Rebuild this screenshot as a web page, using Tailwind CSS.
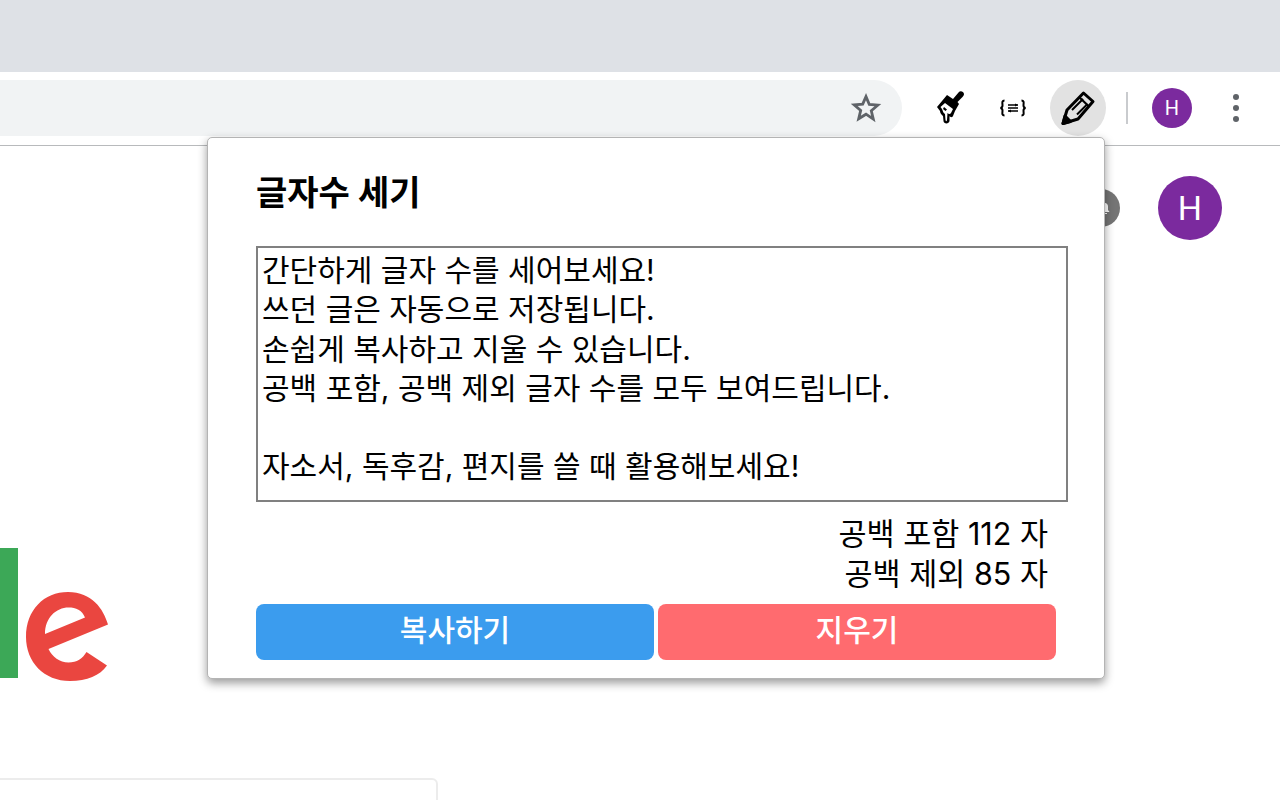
<!DOCTYPE html>
<html lang="ko">
<head>
<meta charset="utf-8">
<script src="https://cdn.jsdelivr.net/npm/@tailwindcss/browser@4"></script>
</head>
<body class="w-[1280px] h-[800px] overflow-hidden bg-white relative font-['Inter','Noto_Sans_CJK_KR',sans-serif]">
  <div class="h-[72px] bg-[#dee1e6]"></div>
  <div class="h-[74px] bg-white border-b border-b-[#b8babc] flex items-center box-border pb-[2px]">
    <div class="w-[902px] h-[56px] bg-[#f1f3f4] rounded-r-[28px] flex items-center justify-end pr-[20px] shrink-0">
      <svg width="32" height="32" viewBox="0 0 32 32"><path d="M16 4.600l3.300 7.900 8.500.7-6.500 5.600 2 8.300L16 22.200l-7.300 4.500 2-8.300-6.500-5.600 8.500-.7z" fill="none" stroke="#5f6368" stroke-width="2.800"/></svg>
    </div>
    <div class="w-[56px] h-[56px] flex items-center justify-center shrink-0 ml-[20px]">
      <svg width="36" height="38" viewBox="0 0 36 38"><path d="M15 6l6 4 5.500-6.500C28 1.500 31.500 2 32 5c0 1.500-1 2.500-2.500 4l-4 4 1.500 2-4 7-2 5c-1 2-3 1-3.500 0v5c-.5 3.500-6 3-6 0l-.5-5c-2-2-3-3-3-5l-3-4z" fill="#000"/><path d="M8.500 18l4.500-4 8 6-2 4c-1 1.500-2.500 1-3.500 0l-.5 7c0 1.500-1.500 1.500-1.500 0l-.5-6c-2-1-2-3-3-5z" fill="#fff"/><path d="M12 18l3 2.500-1.500 1.500-2.500-2z" fill="#000"/></svg>
    </div>
    <div class="w-[44px] h-[56px] flex items-center justify-center shrink-0 ml-[13px]">
      <svg width="30" height="20" viewBox="0 0 30 20" fill="none" stroke="#000" stroke-width="2"><path d="M6.500 2.500C3.500 2.500 4.500 5 4.500 7.500c0 2-2 2.500-2 2.500s2 .5 2 2.500c0 2.500-1 5 2 5M23.500 2.500c3 0 2 2.500 2 5 0 2 2 2.500 2 2.500s-2 .5-2 2.500c0 2.500 1 5-2 5"/><path d="M10 7h10M10 10h10M10 13h10" stroke-width="1.300"/><path d="M17 5.500l3 1.500-3 1.500zM13 11.500l-3 1.500 3 1.500z" fill="#000" stroke="none"/></svg>
    </div>
    <div class="w-[56px] h-[56px] rounded-full bg-[#e2e2e2] flex items-center justify-center shrink-0 ml-[15px]">
      <svg width="36" height="36" viewBox="0 0 36 36" fill="none" stroke="#000" stroke-width="3" stroke-linejoin="round"><path d="M23.500 3l9.500 8.500L18 29 3 33.500 7 20z"/><path d="M19 7l9.500 9" stroke-width="2.200"/><path d="M12 20L23 9M17 24.500L27.500 14" stroke-width="2"/><path d="M3 33.500l2-7.500 5.500 5.500z" fill="#000"/></svg>
    </div>
    <div class="w-[2px] h-[32px] bg-[#c9cbce] ml-[20px] shrink-0"></div>
    <div class="w-[40px] h-[40px] rounded-full bg-[#7b2a9e] text-white ml-[24px] flex items-center justify-center text-[20px] shrink-0 font-['Roboto',sans-serif]">H</div>
    <div class="flex flex-col gap-[5px] ml-[41px] shrink-0">
      <span class="w-[6px] h-[6px] rounded-full bg-[#5f6368] block"></span>
      <span class="w-[6px] h-[6px] rounded-full bg-[#5f6368] block"></span>
      <span class="w-[6px] h-[6px] rounded-full bg-[#5f6368] block"></span>
    </div>
  </div>

  <!-- page behind popup -->
  <div class="absolute left-[1082px] top-[189px] w-[38px] h-[38px] rounded-full bg-[#757575]">
    <svg class="absolute left-[20px] top-[13px]" width="8" height="12" viewBox="0 0 8 12"><path d="M0 10h7.500L6 8V4.500C6 2.500 5 1.500 3.500 1L2 1v10h3v1H2z" fill="#fff"/></svg>
  </div>
  <div class="absolute left-[1158px] top-[176px] w-[64px] h-[64px] rounded-full bg-[#7b2a9e] text-white flex items-center justify-center text-[34px] font-['Roboto',sans-serif]">H</div>
  <div class="absolute left-0 top-[548px] w-[18px] h-[130px] bg-[#3ca857]"></div>
  <svg class="absolute left-[24px] top-[590px]" width="86" height="93" viewBox="0 0 86 93"><path d="M84 34.500 24.500 59c4 8 11 13.500 20 13.500 8.500 0 14-4 18-10.500L83 75.500C76 85.500 63 91 46 91 20 91 2 72 2 47 2 20 20 2 44 2c24 0 35.500 17 40 32.500zM21 44 61 27.500C58 20 52 17.500 44.500 17.500 32 17.500 21 28 21 44z" fill="#ea4640" fill-rule="evenodd"/></svg>
  <div class="absolute -left-[10px] top-[778px] w-[448px] h-[40px] bg-white border-2 border-[#ececec] rounded-[6px]"></div>

  <!-- extension popup -->
  <div class="absolute left-[207px] top-[137px] w-[898px] h-[542px] bg-white rounded-[5px] border border-[#b4b4b4] shadow-[0_4px_10px_rgba(0,0,0,0.4)] box-border pl-[48px] flex flex-col text-black">
    <h1 class="text-[34px] font-bold leading-[44px] mt-[33px] h-[44px]">글자수 세기</h1>
    <textarea class="w-[812px] h-[256px] mt-[31px] border-2 border-[#808080] bg-white px-[4px] py-[3px] text-[30px] leading-[39.3px] resize-none overflow-hidden outline-none block box-border" spellcheck="false">간단하게 글자 수를 세어보세요!
쓰던 글은 자동으로 저장됩니다.
손쉽게 복사하고 지울 수 있습니다.
공백 포함, 공백 제외 글자 수를 모두 보여드립니다.

자소서, 독후감, 편지를 쓸 때 활용해보세요!</textarea>
    <div class="w-[792px] mt-[12px] text-right text-[30.5px] leading-[40px]">
      <p>공백 포함 112 자</p>
      <p>공백 제외 85 자</p>
    </div>
    <div class="flex gap-[4px] mt-[10px]">
      <button class="w-[398px] h-[56px] rounded-[8px] bg-[#3b9cee] text-white text-[30px] font-medium leading-[52px] pb-[4px]">복사하기</button>
      <button class="w-[398px] h-[56px] rounded-[8px] bg-[#ff6b6f] text-white text-[30px] font-medium leading-[52px] pb-[4px]">지우기</button>
    </div>
  </div>
</body>
</html>
